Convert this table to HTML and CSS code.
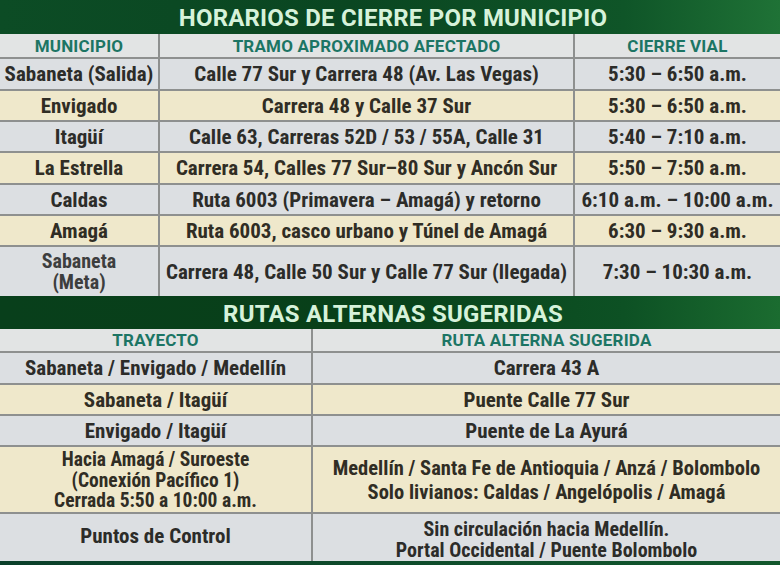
FILE: index.html
```html
<!DOCTYPE html>
<html lang="es">
<head>
<meta charset="utf-8">
<title>Horarios de cierre</title>
<link rel="stylesheet" href="styles.css">
</head>
<body>
<div class="board">
  <div class="banner b1"><span>HORARIOS DE CIERRE POR MUNICIPIO</span></div>
  <div class="grid t1">
    <div class="cell hd">MUNICIPIO</div><div class="cell hd">TRAMO APROXIMADO AFECTADO</div><div class="cell hd">CIERRE VIAL</div>
    <div class="cell g">Sabaneta (Salida)</div><div class="cell g">Calle 77 Sur y Carrera 48 (Av. Las Vegas)</div><div class="cell g">5:30 – 6:50 a.m.</div>
    <div class="cell y">Envigado</div><div class="cell y">Carrera 48 y Calle 37 Sur</div><div class="cell y">5:30 – 6:50 a.m.</div>
    <div class="cell g">Itagüí</div><div class="cell g">Calle 63, Carreras 52D / 53 / 55A, Calle 31</div><div class="cell g">5:40 – 7:10 a.m.</div>
    <div class="cell y">La Estrella</div><div class="cell y">Carrera 54, Calles 77 Sur–80 Sur y Ancón Sur</div><div class="cell y">5:50 – 7:50 a.m.</div>
    <div class="cell g">Caldas</div><div class="cell g">Ruta 6003 (Primavera – Amagá) y retorno</div><div class="cell g">6:10 a.m. – 10:00 a.m.</div>
    <div class="cell y">Amagá</div><div class="cell y">Ruta 6003, casco urbano y Túnel de Amagá</div><div class="cell y">6:30 – 9:30 a.m.</div>
    <div class="cell g two">Sabaneta<br>(Meta)</div><div class="cell g">Carrera 48, Calle 50 Sur y Calle 77 Sur (llegada)</div><div class="cell g">7:30 – 10:30 a.m.</div>
  </div>
  <div class="banner b2"><span>RUTAS ALTERNAS SUGERIDAS</span></div>
  <div class="grid t2">
    <div class="cell hd">TRAYECTO</div><div class="cell hd">RUTA ALTERNA SUGERIDA</div>
    <div class="cell g">Sabaneta / Envigado / Medellín</div><div class="cell g">Carrera 43 A</div>
    <div class="cell y">Sabaneta / Itagüí</div><div class="cell y">Puente Calle 77 Sur</div>
    <div class="cell g">Envigado / Itagüí</div><div class="cell g">Puente de La Ayurá</div>
    <div class="cell y multi lower">Hacia Amagá / Suroeste<br>(Conexión Pacífico 1)<br>Cerrada 5:50 a 10:00 a.m.</div><div class="cell y multi wide">Medellín / Santa Fe de Antioquia / Anzá / Bolombolo<br>Solo livianos: Caldas / Angelópolis / Amagá</div>
    <div class="cell g raise">Puntos de Control</div><div class="cell g multi lower2">Sin circulación hacia Medellín.<br>Portal Occidental / Puente Bolombolo</div>
  </div>
  <div class="foot"></div>
</div>
</body>
</html>
```

FILE: styles.css
```css
html, body {
  margin: 0;
  padding: 0;
  background: #0f5a2a;
}
.board {
  width: 780px;
  height: 565px;
  overflow: hidden;
  font-family: Roboto, "DejaVu Sans", sans-serif;
  font-stretch: 75%;
  font-weight: bold;
  color: #2c2c29;
}
.banner {
  display: flex;
  align-items: center;
  justify-content: center;
  color: #d6f2da;
  font-size: 24px;
  font-stretch: 90%;
  letter-spacing: 0.2px;
}
.banner span { position: relative; left: 3px; top: 1px; }
.b1 { height: 34px; background: linear-gradient(90deg, #0c4c25 0%, #0a4621 45%, #0f5528 80%, #1f7236 100%); }
.b2 { height: 33px; background: linear-gradient(90deg, #083f1b 0%, #084019 45%, #0d5124 80%, #1b6c30 100%); }
.grid {
  display: grid;
  gap: 2px;
  background: #8e908f;
}
.t1 {
  grid-template-columns: 158px 413px 205px;
  grid-template-rows: 23px 30px 29px 29px 30px 29px 29px 49px;
}
.t2 {
  grid-template-columns: 311px 467px;
  grid-template-rows: 22px 30px 29px 29px 65px 47px;
}
.cell {
  display: flex;
  align-items: center;
  justify-content: center;
  text-align: center;
  white-space: nowrap;
  overflow: hidden;
  font-size: 21px;
  line-height: 24px;
}
.hd {
  background: #e2e4e4;
  color: #1c7564;
  font-size: 17px;
  font-stretch: 88%;
  letter-spacing: 0.2px;
}
.t2 .hd { font-stretch: 100%; font-size: 17px; }
.g { background: #dcdfe2; }
.y { background: #efe8cb; color: #302d24; }
.two { line-height: 21px; color: #3d3e3e; font-size: 20px; }
.multi { line-height: 21px; font-size: 20px; }
.wide { line-height: 24px; font-size: 20.5px; }
.lower { padding-top: 3px; line-height: 20.5px; font-size: 19.5px; align-items: flex-start; }
.lower2 { padding-top: 4px; }
.raise { padding-bottom: 3px; }
.foot {
  height: 4px;
  background: linear-gradient(90deg, #0a3f2a, #12572c);
}
```
